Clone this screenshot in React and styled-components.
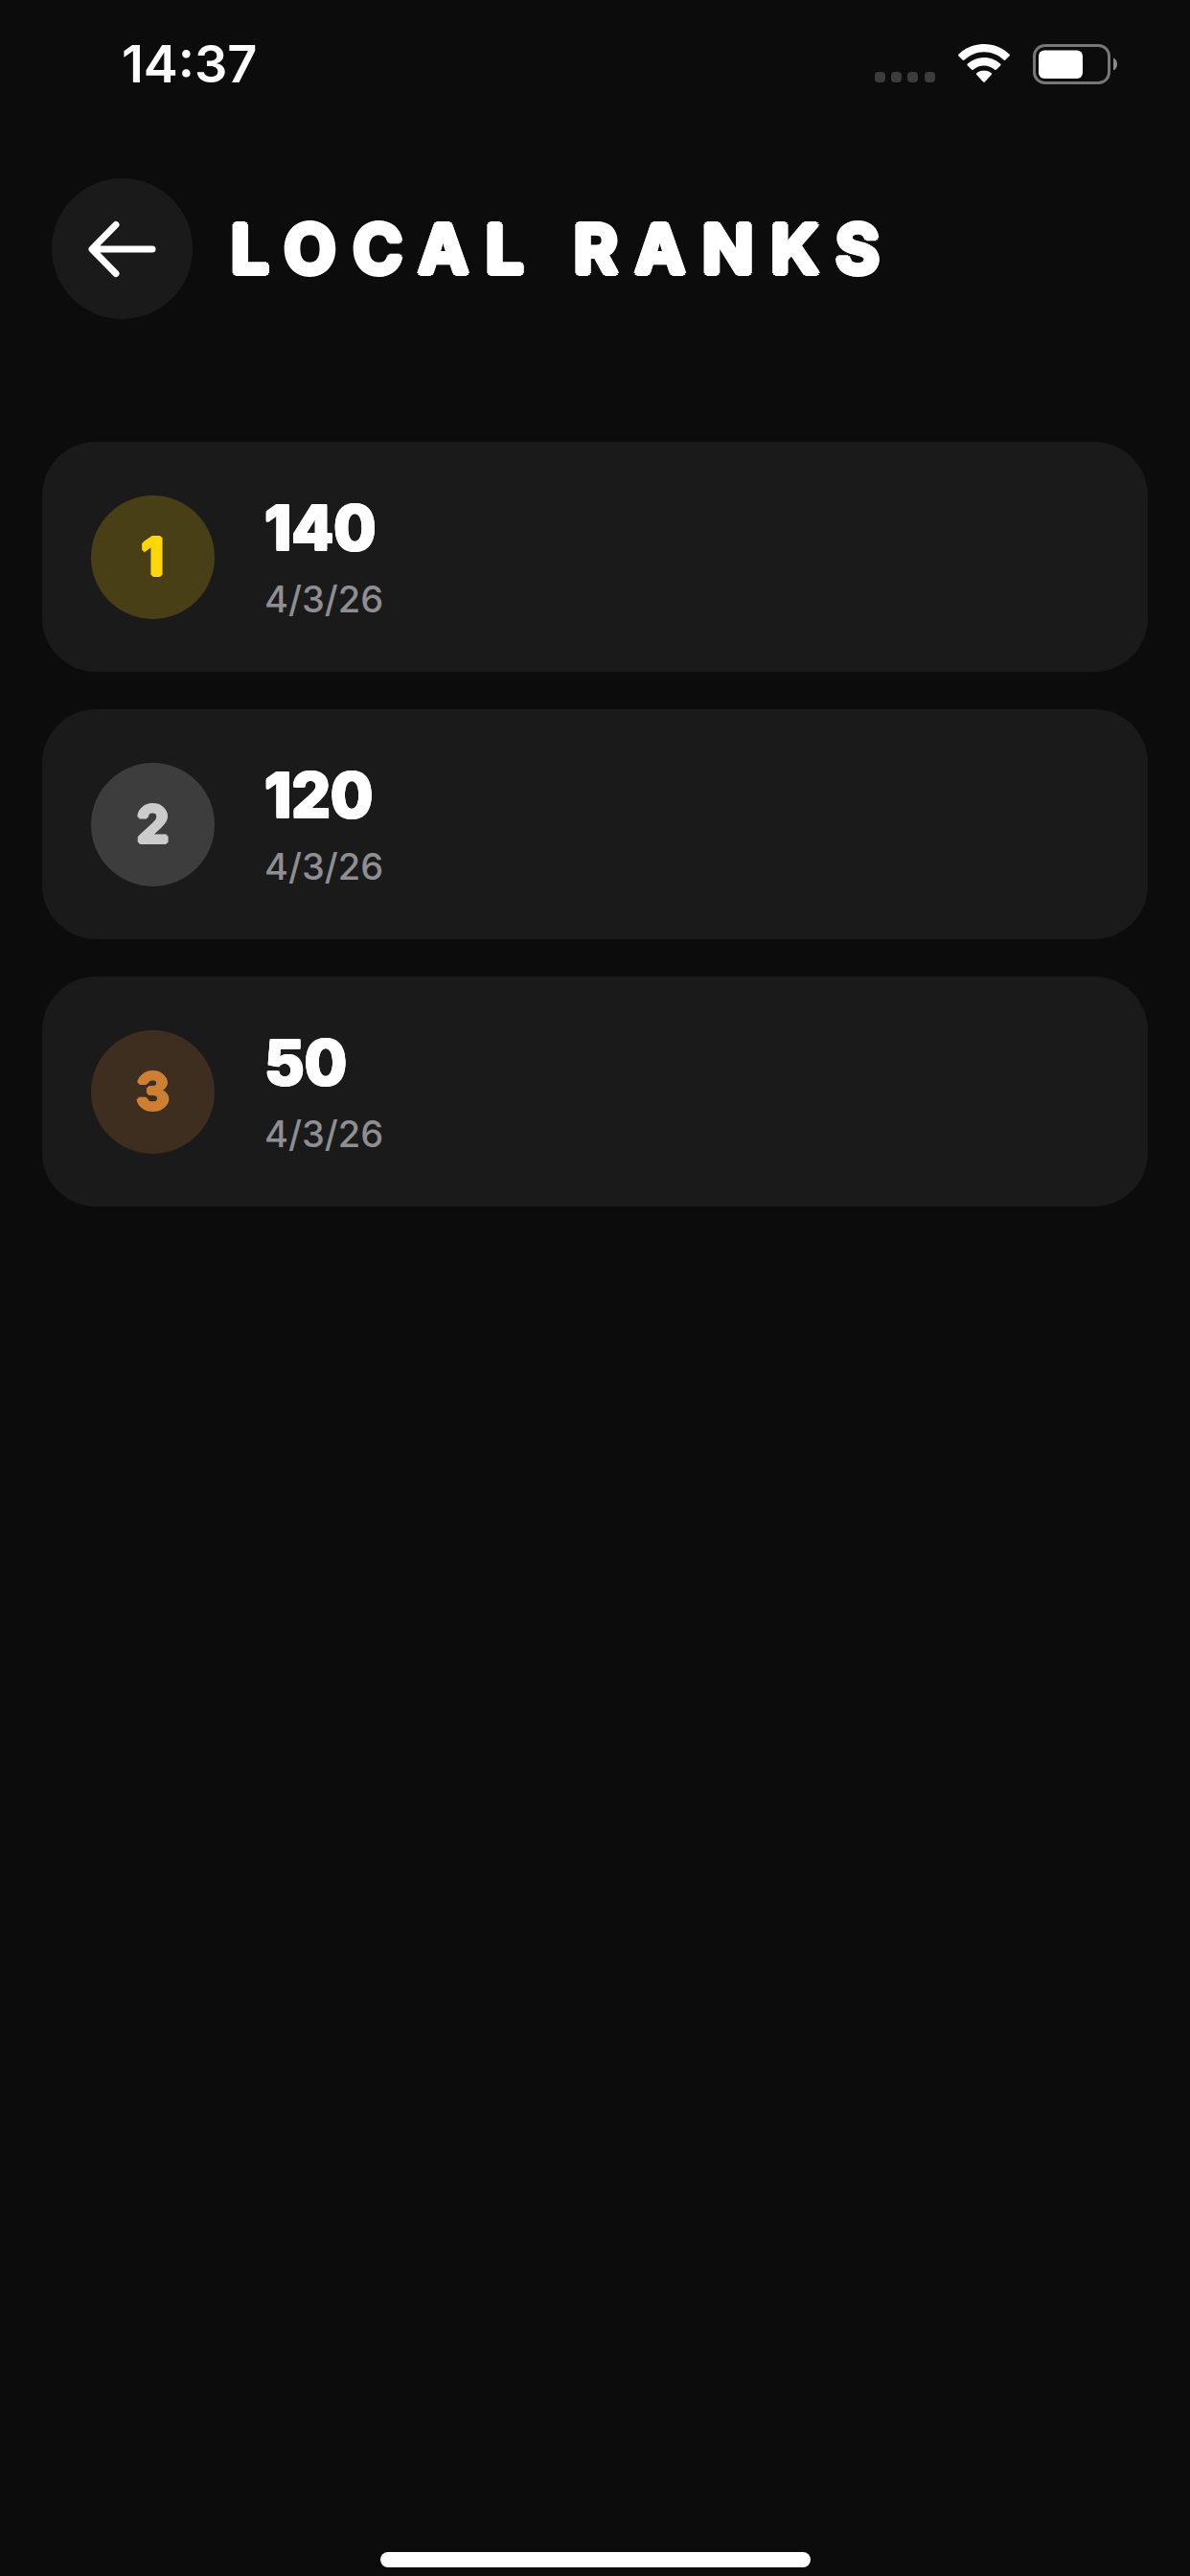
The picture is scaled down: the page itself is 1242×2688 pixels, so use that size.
import React from 'react';
import styled, { createGlobalStyle, css } from 'styled-components';

const GlobalStyle = createGlobalStyle`
  *, *::before, *::after { box-sizing: border-box; }
  body {
    margin: 0;
    background: #0c0c0c;
    color: #fff;
    font-family: Inter, "Liberation Sans", sans-serif;
  }
`;

/* Thickens the glyphs evenly in every direction, which rounds their corners. */
const rounded = (r, d) => css`
  text-shadow:
    ${r}px 0, -${r}px 0, 0 ${r}px, 0 -${r}px,
    ${d}px ${d}px, -${d}px ${d}px, ${d}px -${d}px, -${d}px -${d}px;
`;

const Screen = styled.div`
  min-height: 100vh;
  display: flex;
  flex-direction: column;
`;

const StatusBar = styled.div`
  display: flex;
  align-items: center;
  justify-content: space-between;
  height: 134px;
  padding: 0 75px 0 127px;
`;

const Clock = styled.time`
  font-size: 54px;
  font-weight: 600;
  line-height: 64px;
`;

const StatusIcons = styled.div`
  display: flex;
  align-items: center;
  gap: 24px;
`;

const Header = styled.header`
  display: flex;
  align-items: center;
  gap: 40px;
  padding: 52px 54px 0;
`;

const BackButton = styled.button`
  display: grid;
  place-items: center;
  width: 147px;
  height: 147px;
  padding: 0;
  border: 0;
  border-radius: 50%;
  background: #1a1a1a;
  color: #fff;
  cursor: pointer;
`;

const Title = styled.h1`
  margin: 0;
  font-size: 70px;
  font-weight: 700;
  line-height: 84px;
  letter-spacing: 18px;
  text-transform: uppercase;
  ${rounded(3, 2)}
`;

const RankList = styled.ol`
  flex: 1;
  display: flex;
  flex-direction: column;
  gap: 39px;
  margin: 0;
  padding: 128px 44px 0;
  list-style: none;
`;

const RankCard = styled.li`
  display: flex;
  align-items: center;
  gap: 52px;
  min-height: 240px;
  padding: 0 51px;
  border-radius: 56px;
  background: #1a1a1a;
`;

const Badge = styled.span`
  display: grid;
  place-items: center;
  width: 129px;
  height: 129px;
  border-radius: 50%;
  background: ${({ $fill }) => $fill};
  color: ${({ $ink }) => $ink};
  font-size: 54px;
  font-weight: 700;
  line-height: 64px;
  ${rounded(2, 1)}
`;

const Details = styled.div`
  display: flex;
  flex-direction: column;
  gap: 12px;
`;

const Score = styled.strong`
  font-size: 64px;
  font-weight: 800;
  font-kerning: none;
  line-height: 76px;
  ${rounded(1, 1)}
`;

const PlayedOn = styled.span`
  color: #8e8e93;
  font-size: 38px;
  font-weight: 500;
  line-height: 48px;
`;

const HomeIndicator = styled.div`
  align-self: center;
  width: 449px;
  max-width: 60%;
  height: 16px;
  margin-bottom: 9px;
  border-radius: 8px;
  background: #fff;
`;

const ranks = [
  { place: 1, score: 140, date: '4/3/26', ink: '#ffd60a', fill: '#483f17' },
  { place: 2, score: 120, date: '4/3/26', ink: '#cccccc', fill: '#3d3d3d' },
  { place: 3, score: 50, date: '4/3/26', ink: '#cd7f32', fill: '#3e2e1f' },
];

const Signal = () => (
  <svg width="63" height="42" viewBox="0 0 63 42" fill="#3c3c3c" aria-hidden="true">
    {[0, 17, 34, 52].map((x) => (
      <rect key={x} x={x} y="29" width="11" height="11" rx="4" />
    ))}
  </svg>
);

const Wifi = () => (
  <svg width="54" height="42" viewBox="0 0 54 42" fill="#fff" aria-hidden="true">
    <path d="M27 0C16.800 0 7.500 4 .6 10.500c-.6.600-.6 1.300-.1 1.900l4.100 4.100c.5.500 1.300.5 1.900 0C11.900 11.400 19.100 8.300 27 8.300s15.100 3.100 20.500 8.200c.6.500 1.400.5 1.900 0l4.100-4.100c.5-.6.500-1.300-.1-1.900C46.500 4 37.200 0 27 0z" />
    <path d="M27 14c-6.500 0-12.500 2.500-17.100 6.600-.6.500-.6 1.300-.1 1.800l4.200 4.200c.5.500 1.200.5 1.800.1 3-2.700 6.900-4.300 11.200-4.300s8.200 1.600 11.200 4.300c.6.400 1.300.4 1.800-.1l4.200-4.200c.5-.5.500-1.300-.1-1.800C39.500 16.500 33.500 14 27 14z" />
    <path d="M27 27.500c-2.900 0-5.500 1-7.600 2.700-.6.500-.6 1.300-.1 1.800l6.800 7.400c.5.600 1.300.6 1.800 0l6.800-7.400c.5-.5.500-1.300-.1-1.800-2.100-1.700-4.700-2.700-7.600-2.700z" />
  </svg>
);

const Battery = () => (
  <svg width="89" height="42" viewBox="0 0 89 42" aria-hidden="true">
    <rect x="1.500" y="1.500" width="78" height="39" rx="11" fill="none" stroke="#777" strokeWidth="3" />
    <rect x="6" y="6.500" width="46" height="29.500" rx="6" fill="#fff" />
    <path d="M84 14.500c2.500 1 4 3.500 4 6.500s-1.500 5.500-4 6.500z" fill="#8a8a8a" />
  </svg>
);

const ArrowLeft = () => (
  <svg width="72" height="60" viewBox="0 0 72 60" fill="none" stroke="#fff" strokeWidth="7" strokeLinecap="round" strokeLinejoin="round" aria-hidden="true">
    <path d="M67 30H5M29 4.500 4 30l25 25.500" />
  </svg>
);

export default function App() {
  return (
    <>
      <GlobalStyle />
      <Screen>
        <StatusBar>
          <Clock>14:37</Clock>
          <StatusIcons>
            <Signal />
            <Wifi />
            <Battery />
          </StatusIcons>
        </StatusBar>
        <Header>
          <BackButton type="button" aria-label="Back">
            <ArrowLeft />
          </BackButton>
          <Title>Local Ranks</Title>
        </Header>
        <RankList>
          {ranks.map(({ place, score, date, ink, fill }) => (
            <RankCard key={place}>
              <Badge $ink={ink} $fill={fill}>{place}</Badge>
              <Details>
                <Score>{score}</Score>
                <PlayedOn>{date}</PlayedOn>
              </Details>
            </RankCard>
          ))}
        </RankList>
        <HomeIndicator />
      </Screen>
    </>
  );
}
